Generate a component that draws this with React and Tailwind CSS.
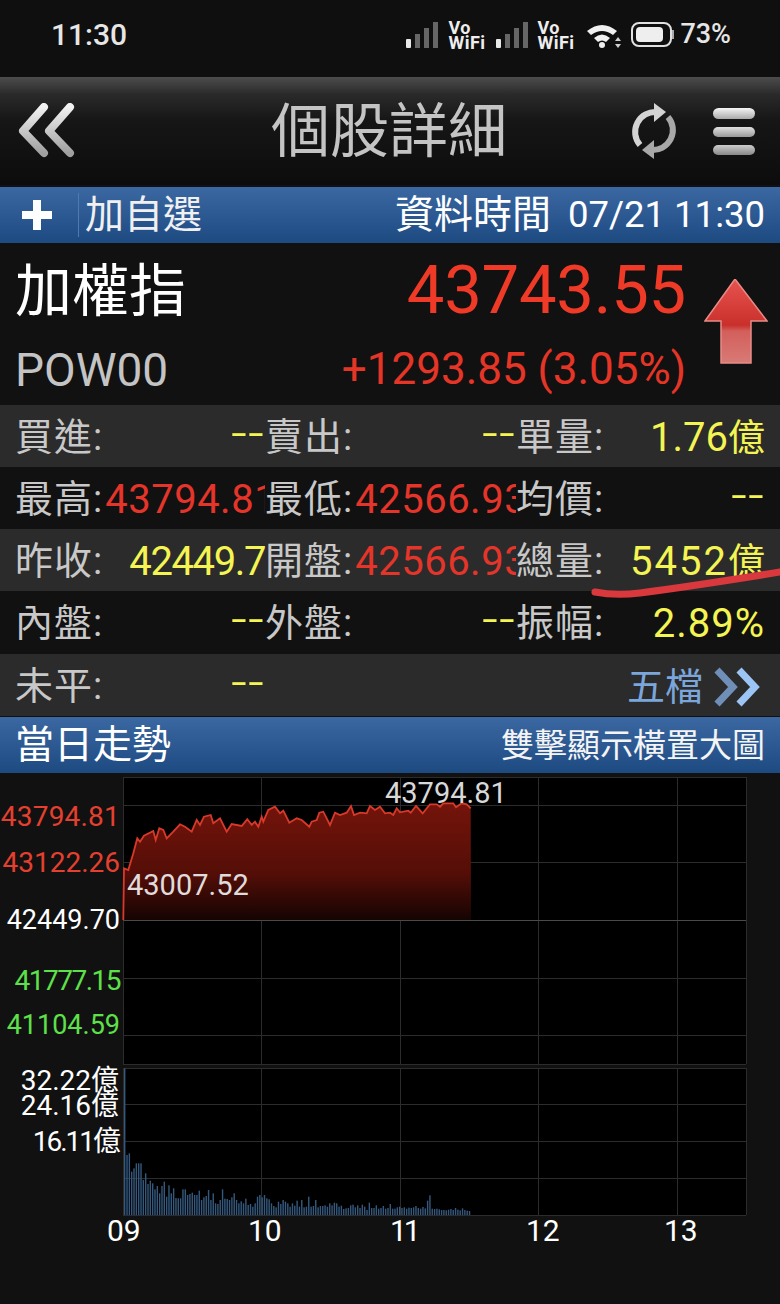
import React from 'react';

const linePts = [[370,450],[372,295],[385,300],[400,250],[412,205],[420,215],[432,197],[460,183],[467,210],[478,175],[490,180],[500,205],[520,185],[540,163],[555,170],[575,185],[590,150],[600,165],[612,140],[632,135],[640,160],[660,145],[680,185],[695,162],[725,168],[742,148],[755,165],[765,155],[775,170],[785,140],[790,155],[805,120],[825,110],[840,130],[850,122],[868,158],[890,145],[905,150],[928,170],[935,155],[950,150],[958,128],[970,125],[990,165],[1005,128],[1020,135],[1040,128],[1053,108],[1062,135],[1080,128],[1100,130],[1110,108],[1125,120],[1140,110],[1155,130],[1170,128],[1180,135],[1190,115],[1200,127],[1225,122],[1232,128],[1248,108],[1268,130],[1290,103],[1310,103],[1320,110],[1330,100],[1360,100],[1368,112],[1385,100],[1400,103],[1412,115]];
const line = linePts.map(([x, y]) => `${(x / 3).toFixed(1)},${(y / 3 + 770).toFixed(1)}`).join(' ');

// tops of the volume bars, read from the 3x crop (baseline 465)
const volTops = [25,285,280,335,325,310,310,310,360,340,372,362,370,388,378,400,378,365,410,376,400,385,414,415,415,388,388,405,402,398,405,405,392,420,412,408,390,420,400,430,432,420,388,416,417,420,412,400,420,430,424,430,416,435,432,440,430,410,405,412,405,415,418,430,438,442,425,432,420,425,430,440,430,437,422,440,420,442,440,410,440,438,420,442,438,438,436,440,430,436,428,430,440,437,447,445,444,436,434,442,436,444,434,440,450,428,444,444,436,446,444,438,446,444,432,446,446,442,440,444,442,446,443,444,442,438,444,446,441,445,422,406,446,447,446,448,450,450,451,449,447,450,444,449,451,445,450,452,453];

const Cell = ({ label, value, color = 'text-[#f4f453]', w = 'w-[251px]', pl = '', clip = false, tight = false }) => (
  <div className={`flex items-center ${w} ${pl} shrink-0`}>
    <span className="text-[#c8c8c8] text-[38px] leading-[1.2] tracking-[1px] shrink-0">{label}</span>
    <span className={`flex-1 min-w-0 whitespace-nowrap text-right text-[40px] leading-[1.2] ${clip ? 'overflow-hidden ml-[2px] tracking-[0.5px]' : ''} ${tight ? 'tracking-[-1.4px]' : ''} ${color}`}>{value}</span>
  </div>
);

const Dash = () => <span className="text-[56px] font-light leading-[40px] tracking-[1px]">--</span>;
const Yi = () => <span className="text-[37px] tracking-normal">億</span>;

const Row = ({ dark, h = 'h-[62px]', children }) => (
  <div className={`flex items-center pt-[3px] ${h} ${dark ? 'bg-[#111111]' : 'bg-[#2b2b2b]'}`}>{children}</div>
);

const Signal = () => (
  <svg width="33" height="26" viewBox="0 0 33 26">
    <rect x="0" y="17" width="5" height="9" rx="1" fill="#e8e8e8" />
    <rect x="9" y="12" width="5" height="14" fill="#666" />
    <rect x="18" y="6" width="5" height="20" fill="#666" />
    <rect x="27" y="0" width="5" height="26" fill="#666" />
  </svg>
);

const VoWifi = () => (
  <div className="flex flex-col text-[#eeeeee] text-[18px] leading-[15px] tracking-[0.5px] font-bold w-[43px] pl-[1px]">
    <span>Vo</span>
    <span>WiFi</span>
  </div>
);

export default function App() {
  return (
    <div className="relative w-[780px] h-[1304px] overflow-hidden bg-[#111111] font-['Roboto','Noto_Sans_CJK_TC',sans-serif]">
      {/* status bar */}
      <div className="flex items-center h-[77px] pb-[8px] pl-[51px] pr-[49px] bg-[#0f0f0f]">
        <span className="text-[#e6e6e6] text-[30px] font-medium leading-none">11:30</span>
        <div className="ml-auto flex items-center">
          <Signal />
          <div className="w-[8px]" />
          <VoWifi />
          <div className="w-[6px]" />
          <Signal />
          <div className="w-[7px]" />
          <VoWifi />
          <div className="w-[7px]" />
          <svg width="36" height="26" viewBox="0 0 36 26">
            <path d="M1 9 Q16 -3 31 9 L27 13 Q16 5 5 13 Z" fill="#f0f0f0" />
            <path d="M8 16 Q16 9 24 16 L20 20 Q16 17 12 20 Z" fill="#f0f0f0" />
            <circle cx="16" cy="23" r="3" fill="#f0f0f0" />
            <path d="M32 15 l3 4 h-6 Z M32 26 l3 -4 h-6 Z" fill="#d0d0d0" />
          </svg>
          <div className="w-[9px]" />
          <div className="flex items-center justify-start w-[41px] h-[25px] border-2 border-[#e0e0e0] rounded-[8px] p-[3px]">
            <div className="w-[27px] h-full bg-[#eeeeee] rounded-[4px]" />
          </div>
          <div className="w-[2px] h-[9px] bg-[#aaa] mr-[6px]" />
          <span className="text-[#e6e6e6] text-[27px] font-medium leading-none">73%</span>
        </div>
      </div>

      {/* title bar */}
      <div className="relative flex items-center h-[108px] px-[18px] bg-[linear-gradient(#4c4c4c,#2a2a2a_16%,#161616_40%,#0c0c0c)]">
        <svg width="58" height="56" viewBox="0 0 58 56">
          <defs>
            <linearGradient id="silver" x1="0" y1="0" x2="0" y2="1">
              <stop offset="0" stopColor="#f2f2f2" />
              <stop offset="1" stopColor="#a0a0a0" />
            </linearGradient>
          </defs>
          <path d="M26 4 L5 28 L26 50" fill="none" stroke="url(#silver)" strokeWidth="8" strokeLinecap="round" strokeLinejoin="round" />
          <path d="M52 4 L31 28 L52 50" fill="none" stroke="url(#silver)" strokeWidth="8" strokeLinecap="round" strokeLinejoin="round" />
        </svg>
        <div className="flex-1 text-center text-[#c4c4c4] text-[59px] leading-none pl-[72px]">個股詳細</div>
        <svg width="48" height="56" viewBox="0 0 48 56">
          <path d="M10 42 A20 20 0 0 1 27 9" fill="none" stroke="#d4d4d4" strokeWidth="6" />
          <path d="M24 0 L36 9 L24 19 Z" fill="#d4d4d4" />
          <path d="M38 14 A20 20 0 0 1 21 47" fill="none" stroke="#a8a8a8" strokeWidth="6" />
          <path d="M24 37 L12 47 L24 56 Z" fill="#a8a8a8" />
        </svg>
        <div className="flex flex-col gap-[8px] ml-[35px] mr-[7px]">
          <div className="w-[42px] h-[11px] rounded-full bg-[linear-gradient(#f5f5f5,#aaaaaa)]" />
          <div className="w-[42px] h-[10px] rounded-full bg-[linear-gradient(#e0e0e0,#999999)]" />
          <div className="w-[42px] h-[10px] rounded-full bg-[linear-gradient(#cccccc,#888888)]" />
        </div>
      </div>

      {/* watchlist bar */}
      <div className="flex items-center h-[56px] mt-[2px] pr-[15px] bg-[linear-gradient(#3b68a2,#1e4a82)] text-white">
        <div className="relative ml-[22px] w-[30px] h-[30px] shrink-0">
          <div className="absolute left-[11px] top-0 w-[8px] h-[30px] bg-white" />
          <div className="absolute left-0 top-[11px] w-[30px] h-[8px] bg-white" />
        </div>
        <div className="w-px h-[44px] ml-[26px] bg-[#4f7ab0]" />
        <span className="ml-[6px] text-[#f0f0f0] text-[39px] leading-none">加自選</span>
        <span className="ml-auto text-[39px] leading-none">資料時間</span>
        <span className="ml-[17px] text-[36.5px] leading-none whitespace-nowrap">07/21 11:30</span>
      </div>

      {/* quote */}
      <div className="flex h-[162px]">
        <div className="flex flex-col w-[300px] pl-[15px]">
          <span className="text-white text-[57px] leading-none mt-[20px]">加權指</span>
          <span className="text-[#c4c4c4] text-[46px] leading-none mt-[27px]">POW00</span>
        </div>
        <div className="flex flex-col items-end w-[386px]">
          <span className="text-[#ee3a26] text-[67px] leading-none mt-[14px] tracking-[-0.25px]">43743.55</span>
          <span className="text-[#e53527] text-[44px] leading-none mt-[23px] whitespace-nowrap">+1293.85 (3.05%)</span>
        </div>
        <svg width="64" height="86" viewBox="0 0 64 86" className="ml-[18px] mt-[36px]">
          <defs>
            <linearGradient id="arrow" x1="0" y1="0" x2="0" y2="1">
              <stop offset="0" stopColor="#e8534f" />
              <stop offset="0.55" stopColor="#c9302b" />
              <stop offset="0.62" stopColor="#d35f5b" />
              <stop offset="1" stopColor="#d87a76" />
            </linearGradient>
          </defs>
          <path d="M31 0 L63 42 L47 42 L47 84 L17 84 L17 42 L1 42 Z" fill="url(#arrow)" stroke="#e88a86" strokeWidth="1.5" />
        </svg>
      </div>

      {/* data rows */}
      <Row>
        <Cell label="買進:" value={<Dash />} w="w-[265px]" pl="pl-[15px]" />
        <Cell label="賣出:" value={<Dash />} />
        <Cell label="單量:" value={<>1.76<Yi /></>} w="w-[249px]" />
      </Row>
      <Row dark>
        <Cell label="最高:" value="43794.81" color="text-[#e5352a]" w="w-[265px]" pl="pl-[15px]" clip />
        <Cell label="最低:" value="42566.93" color="text-[#e5352a]" clip />
        <Cell label="均價:" value={<Dash />} w="w-[249px]" />
      </Row>
      <Row>
        <Cell label="昨收:" value="42449.7" w="w-[265px]" pl="pl-[15px]" tight />
        <Cell label="開盤:" value="42566.93" color="text-[#e5352a]" clip />
        <Cell label="總量:" value={<span className="tracking-[2px]">5452<Yi /></span>} w="w-[249px]" />
      </Row>
      <Row dark h="h-[63px]">
        <Cell label="內盤:" value={<Dash />} w="w-[265px]" pl="pl-[15px]" />
        <Cell label="外盤:" value={<Dash />} />
        <Cell label="振幅:" value={<span className="tracking-[1px]">2.89%</span>} w="w-[249px]" />
      </Row>
      <Row>
        <Cell label="未平:" value={<Dash />} w="w-[265px]" pl="pl-[15px]" />
        <div className="ml-auto flex items-center pr-[20px]">
          <span className="text-[#7ba6dc] text-[38px] leading-none">五檔</span>
          <svg width="48" height="40" viewBox="0 0 48 40" className="ml-[9px]">
            <path d="M5 3 L21 20 L5 37" fill="none" stroke="#6f8fb8" strokeWidth="7" />
            <path d="M27 3 L43 20 L27 37" fill="none" stroke="#9cc4f4" strokeWidth="7" />
          </svg>
        </div>
      </Row>

      {/* trend header */}
      <div className="flex items-center justify-between h-[56px] mt-px pl-[15px] pr-[15px] bg-[linear-gradient(#3b68a2,#1e4a82)] text-white">
        <span className="text-[39px] leading-none">當日走勢</span>
        <span className="text-[#f4f4f4] text-[33px] leading-none">雙擊顯示橫置大圖</span>
      </div>

      {/* chart area, svg uses page coordinates */}
      <div className="relative h-[531px]">
        <svg width="780" height="531" viewBox="0 773 780 531" className="absolute inset-0">
          <defs>
            <linearGradient id="fill" x1="0" y1="0" x2="0" y2="1">
              <stop offset="0" stopColor="#74140b" />
              <stop offset="0.6" stopColor="#540e07" />
              <stop offset="1" stopColor="#150403" />
            </linearGradient>
          </defs>
          <rect x="123" y="777" width="623" height="287" fill="#000" />
          <rect x="123" y="1068" width="623" height="147" fill="#000" />
          <g stroke="#2c2c2c" strokeWidth="1">
            {[777, 805, 862, 978, 1035, 1064, 1068, 1104, 1141, 1178, 1215].map((y) => (
              <line key={y} x1="123" x2="746" y1={y + 0.5} y2={y + 0.5} />
            ))}
            {[123, 261, 400, 538, 677, 746].map((x) => (
              <g key={x}>
                <line x1={x + 0.5} x2={x + 0.5} y1="777" y2="1064" />
                <line x1={x + 0.5} x2={x + 0.5} y1="1068" y2="1215" />
              </g>
            ))}
          </g>
          <polygon points={`${line} 471,920 123,920`} fill="url(#fill)" />
          <line x1="123" x2="746" y1="920.5" y2="920.5" stroke="#4a4a4a" />
          <polyline points={line} fill="none" stroke="#d8392a" strokeWidth="1.8" />
          <g fill="#35597e">
            {volTops.map((t, i) => (
              <rect key={i} x={124 + i * 2.33} y={1060 + t / 3} width="1.4" height={(465 - t) / 3} />
            ))}
          </g>
        </svg>

        <span className="absolute right-[660px] top-[30px] text-[#e5402f] text-[28px] leading-none tracking-[0.2px]">43794.81</span>
        <span className="absolute right-[660px] top-[76px] text-[#e5402f] text-[28px] leading-none">43122.26</span>
        <span className="absolute right-[660px] top-[134px] text-white text-[27px] leading-none">42449.70</span>
        <span className="absolute right-[660px] top-[194px] text-[#5ee04a] text-[28px] leading-none tracking-[-1.5px]">41777.15</span>
        <span className="absolute right-[660px] top-[239px] text-[#5ee04a] text-[27px] leading-none">41104.59</span>
        <span className="absolute left-[127px] top-[98px] text-[#e0dcdc] text-[29px] leading-none">43007.52</span>
        <span className="absolute left-[385px] top-[6px] text-[#d8d8d8] text-[29px] leading-none">43794.81</span>

        <span className="absolute right-[661px] top-[294px] text-white text-[28px] leading-none">32.22億</span>
        <span className="absolute right-[661px] top-[319px] text-white text-[28px] leading-none">24.16億</span>
        <span className="absolute right-[661px] top-[355px] text-white text-[28px] leading-none tracking-[-2px]">16.11億</span>

        <span className="absolute left-[107px] top-[443px] text-white text-[30px] leading-none">09</span>
        <span className="absolute left-[248px] top-[443px] text-white text-[30px] leading-none">10</span>
        <span className="absolute left-[390px] top-[443px] text-white text-[30px] leading-none tracking-[-3px]">11</span>
        <span className="absolute left-[526px] top-[443px] text-white text-[30px] leading-none">12</span>
        <span className="absolute left-[664px] top-[443px] text-white text-[30px] leading-none">13</span>
      </div>

      {/* hand drawn underline on the screenshot */}
      <svg width="200" height="36" viewBox="0 0 200 36" className="absolute left-[580px] top-[565px]">
        <path d="M15 27 Q35 31 60 28 Q120 20 200 7" fill="none" stroke="#d9383c" strokeWidth="7" strokeLinecap="round" />
      </svg>
    </div>
  );
}
